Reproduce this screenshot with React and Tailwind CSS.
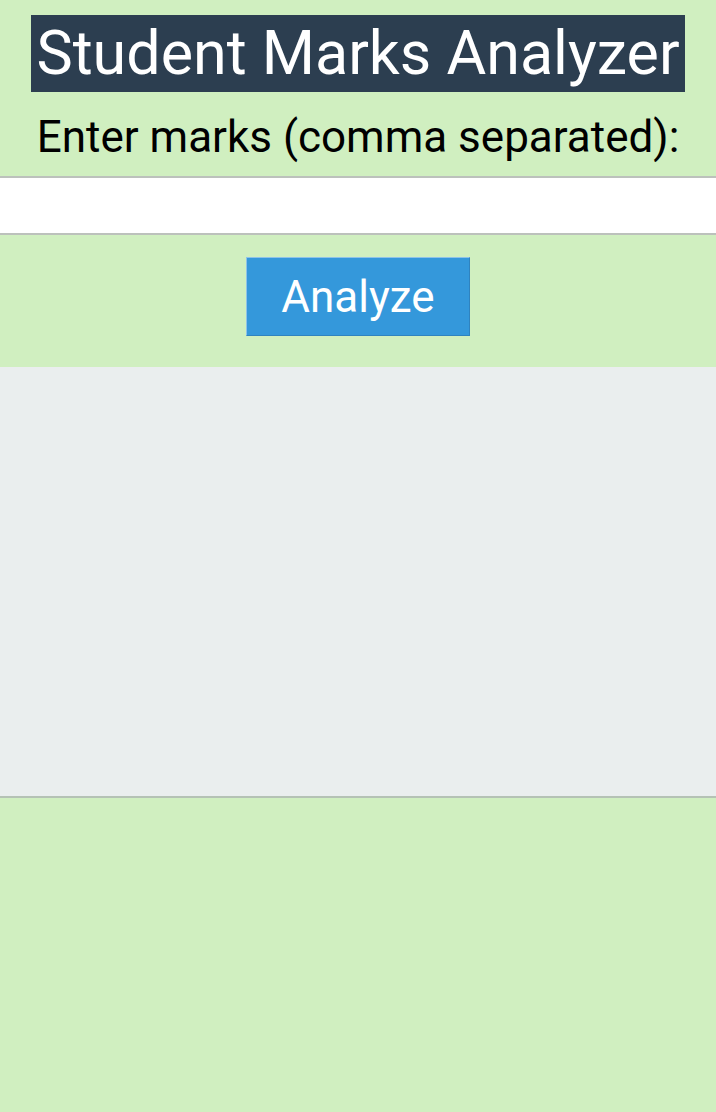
import React, { useState } from 'react';

export default function App() {
  const [marks, setMarks] = useState('');

  return (
    <div className="min-h-[1112px] bg-[#d0efc0] text-center font-['Roboto',sans-serif]">
      <div className="pt-[15px]">
        <h1 className="inline-block bg-[#2c3e50] px-[5px] text-[61px] leading-[77px] font-normal text-white">
          Student Marks Analyzer
        </h1>
      </div>
      <label className="block pt-[19px] pb-[13px] text-[44px] leading-[52px] text-black">
        Enter marks (comma separated):
      </label>
      <input
        type="text"
        value={marks}
        onChange={(e) => setMarks(e.target.value)}
        className="block h-[59px] w-full border-y-2 border-[#bcc1bc] bg-white px-3 text-[32px] outline-none"
      />
      <div className="pt-[22px] pb-[31px]">
        <button className="h-[79px] w-[224px] border border-[#2f83bf] border-t-[#8ec3e8] border-l-[#8ec3e8] bg-[#3498db] text-[44px] leading-[52px] text-white">
          Analyze
        </button>
      </div>
      <div className="h-[431px] border-b-2 border-[#b5c2b5] bg-[#eaeeee]"></div>
    </div>
  );
}
